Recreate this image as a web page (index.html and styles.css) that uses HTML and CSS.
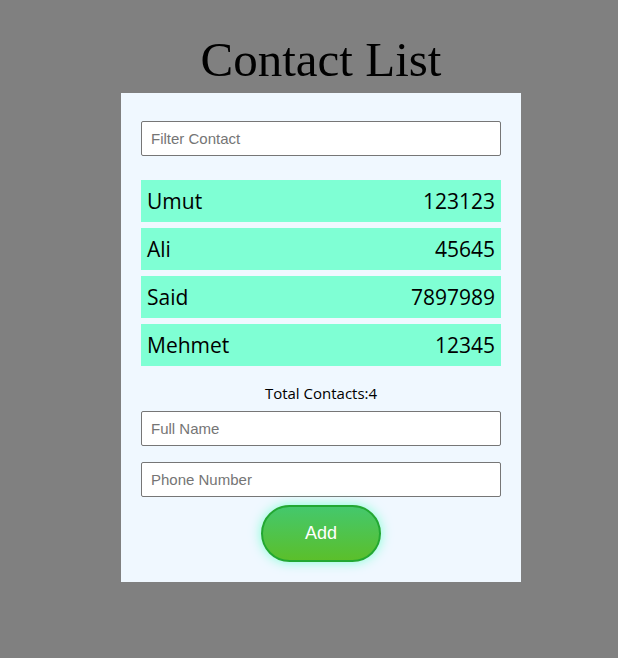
FILE: index.html
```html
<!DOCTYPE html>
<html>
<head>
<meta charset="utf-8">
<link rel="stylesheet" href="styles.css">
</head>
<body>
<div class="app">
  <h1 class="title">Contact List</h1>
  <div class="card">
    <input class="field filter" type="text" placeholder="Filter Contact">
    <ul class="list">
      <li class="item"><span>Umut</span><span>123123</span></li>
      <li class="item"><span>Ali</span><span>45645</span></li>
      <li class="item"><span>Said</span><span>7897989</span></li>
      <li class="item"><span>Mehmet</span><span>12345</span></li>
    </ul>
    <p class="total">Total Contacts:4</p>
    <input class="field" type="text" placeholder="Full Name">
    <input class="field phone" type="text" placeholder="Phone Number">
    <div class="actions"><button class="add">Add</button></div>
  </div>
</div>
</body>
</html>
```
FILE: styles.css
```css
html, body {
  margin: 0;
  padding: 0;
  background: #808080;
}
.app {
  display: flex;
  flex-direction: column;
  align-items: center;
  padding: 30px 0 0 24px;
}
.title {
  margin: 0 0 4px;
  font-family: "Liberation Serif", serif;
  font-weight: normal;
  font-size: 49px;
  line-height: 59px;
  color: #000;
}
.card {
  box-sizing: border-box;
  width: 400px;
  background: #f0f8ff;
  padding: 28px 20px 20px;
  display: flex;
  flex-direction: column;
}
.field {
  box-sizing: border-box;
  width: 360px;
  height: 35px;
  border: 1px solid #767676;
  border-radius: 2px;
  padding: 0 9px;
  font-family: "Liberation Sans", Arial, sans-serif;
  font-size: 15px;
  background: #fff;
  margin: 0;
}
.field::placeholder {
  color: #757575;
}
.list {
  list-style: none;
  margin: 24px 0 0;
  padding: 0;
  display: flex;
  flex-direction: column;
  gap: 6px;
}
.item {
  height: 42px;
  background: #7fffd4;
  display: flex;
  justify-content: space-between;
  align-items: center;
  padding: 0 6px;
  font-family: "Open Sans", sans-serif;
  font-size: 21px;
  color: #000;
}
.total {
  margin: 17px 0 8px;
  text-align: center;
  font-family: "Open Sans", sans-serif;
  font-size: 15px;
  line-height: 20px;
  color: #000;
}
.phone {
  margin-top: 16px;
}
.actions {
  display: flex;
  justify-content: center;
  margin-top: 8px;
}
.add {
  box-sizing: border-box;
  width: 120px;
  height: 57px;
  border: 2px solid #22a832;
  border-radius: 30px;
  background: linear-gradient(to bottom, #44c86c, #5bbf2b);
  box-shadow: 0 0 12px #7fffd4;
  color: #fff;
  font-family: "Liberation Sans", Arial, sans-serif;
  font-size: 18px;
}
```
